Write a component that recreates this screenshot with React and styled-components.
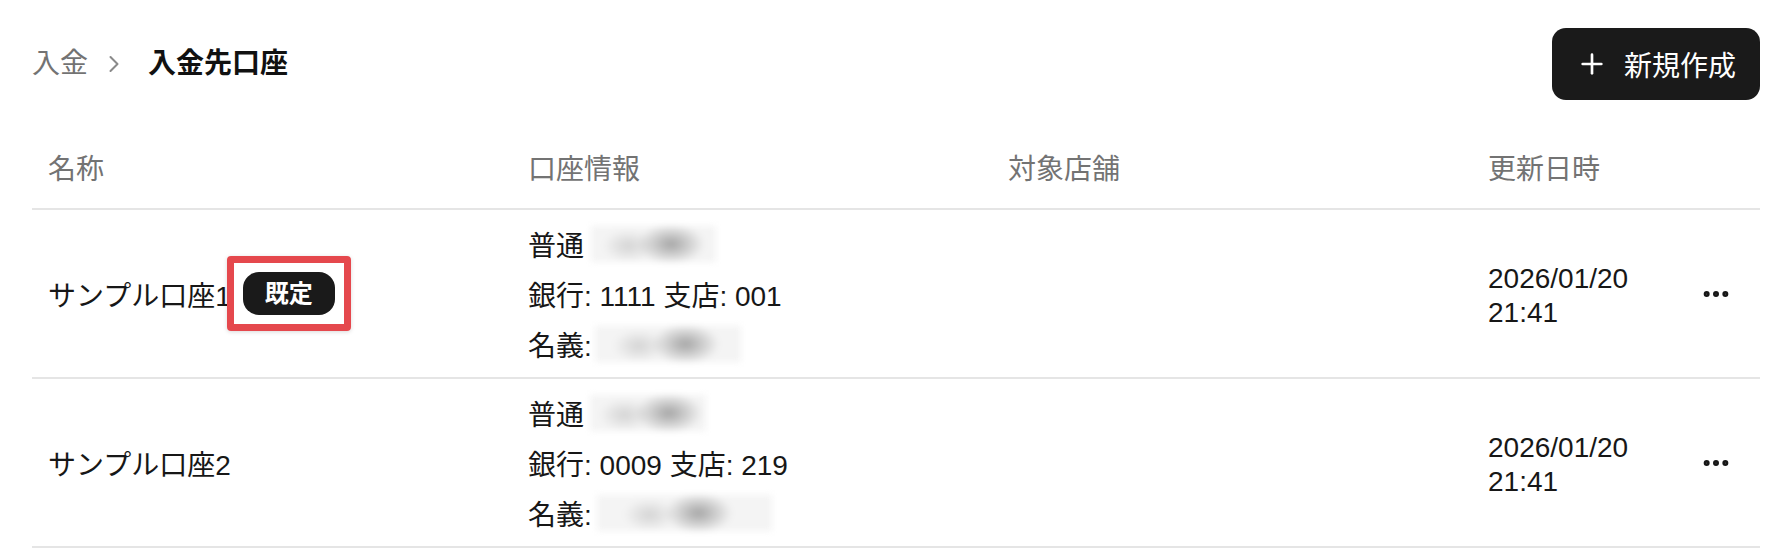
import styled, { createGlobalStyle } from 'styled-components';
import { Plus, Ellipsis, ChevronRight } from 'lucide-react';

const accounts = [
  {
    name: 'サンプル口座1',
    isDefault: true,
    bank: '1111',
    branch: '001',
    numberBlur: { w: 125, gap: 7, spot: 64 },
    holderBlur: { w: 146, gap: 3, spot: 62 },
    updated: '2026/01/20 21:41',
  },
  {
    name: 'サンプル口座2',
    isDefault: false,
    bank: '0009',
    branch: '219',
    numberBlur: { w: 116, gap: 6, spot: 68 },
    holderBlur: { w: 175, gap: 5, spot: 58 },
    updated: '2026/01/20 21:41',
  },
];

const App = () => {
  return (
    <Page>
      <GlobalStyle />
      <TopBar>
        <Breadcrumb>
          <Crumb>入金</Crumb>
          <Separator>
            <ChevronRight size={28} strokeWidth={1.75} />
          </Separator>
          <Current>入金先口座</Current>
        </Breadcrumb>
        <NewButton>
          <Plus size={32} strokeWidth={2} />
          新規作成
        </NewButton>
      </TopBar>

      <Table>
        <HeadRow>
          <HeadCell>名称</HeadCell>
          <HeadCell>口座情報</HeadCell>
          <HeadCell>対象店舗</HeadCell>
          <HeadCell>更新日時</HeadCell>
          <HeadCell />
        </HeadRow>
        {accounts.map((a) => (
          <BodyRow key={a.name}>
            <NameCell>
              {a.name}
              {a.isDefault && <Badge>既定</Badge>}
            </NameCell>
            <AccountCell>
              <AccountLine>
                普通
                <Blur $w={a.numberBlur.w} $gap={a.numberBlur.gap} $spot={a.numberBlur.spot} />
              </AccountLine>
              <AccountLine>
                銀行: {a.bank} 支店: {a.branch}
              </AccountLine>
              <AccountLine>
                名義:
                <Blur $w={a.holderBlur.w} $gap={a.holderBlur.gap} $spot={a.holderBlur.spot} />
              </AccountLine>
            </AccountCell>
            <Cell />
            <DateCell>{a.updated}</DateCell>
            <ActionCell>
              <Ellipsis size={32} strokeWidth={2.5} />
            </ActionCell>
          </BodyRow>
        ))}
      </Table>
    </Page>
  );
};

const GlobalStyle = createGlobalStyle`
  body {
    margin: 0;
    background: #ffffff;
    color: #171717;
    font-family: "Liberation Sans", "Noto Sans CJK JP", sans-serif;
  }
`;

const Page = styled.div`
  padding: 28px 32px 0;
`;

const TopBar = styled.div`
  display: flex;
  justify-content: space-between;
  align-items: center;
  height: 72px;
`;

const Breadcrumb = styled.nav`
  display: flex;
  align-items: center;
  font-size: 28px;
  line-height: 1;
`;

const Crumb = styled.span`
  color: #737373;
`;

const Separator = styled.span`
  display: flex;
  color: #8a8a8a;
  margin: 0 20px 0 12px;
`;

const Current = styled.span`
  font-weight: 700;
  color: #111111;
`;

const NewButton = styled.button`
  display: inline-flex;
  align-items: center;
  gap: 16px;
  height: 72px;
  padding: 0 24px;
  border: none;
  border-radius: 14px;
  background: #1a1a1a;
  color: #ffffff;
  font-family: inherit;
  font-size: 28px;
  cursor: pointer;
`;

const Table = styled.div`
  margin-top: 26px;
`;

const Row = styled.div`
  display: grid;
  grid-template-columns: 1fr 1fr 1fr 200px 88px;
  border-bottom: 2px solid #e5e5e5;
`;

const HeadRow = styled(Row)`
  height: 82px;
`;

const BodyRow = styled(Row)`
  height: 167px;
`;

const Cell = styled.div`
  display: flex;
  align-items: center;
  padding: 0 16px;
  font-size: 28px;
`;

const HeadCell = styled(Cell)`
  color: #737373;
`;

const NameCell = styled(Cell)`
  gap: 12px;
  white-space: nowrap;
`;

const AccountCell = styled(Cell)`
  flex-direction: column;
  align-items: flex-start;
  justify-content: center;
  gap: 8px;
`;

const AccountLine = styled.div`
  display: flex;
  align-items: center;
  height: 42px;
  white-space: pre;
`;

const Blur = styled.span`
  display: inline-block;
  width: ${(p) => p.$w}px;
  height: 36px;
  margin-left: ${(p) => p.$gap}px;
  background:
    radial-gradient(ellipse 34px 20px at ${(p) => p.$spot}% 50%, rgba(150, 150, 150, 0.85), transparent),
    radial-gradient(ellipse 26px 16px at 30% 55%, rgba(185, 185, 185, 0.55), transparent),
    #f4f4f4;
  filter: blur(3px);
`;

const DateCell = styled(Cell)`
  padding-top: 5px;
  line-height: 34px;
`;

const ActionCell = styled(Cell)`
  justify-content: center;
  color: #171717;
`;

const Badge = styled.span`
  position: relative;
  display: inline-block;
  padding: 6px 22px;
  border-radius: 16px;
  background: #1a1a1a;
  color: #ffffff;
  font-size: 24px;
  font-weight: 700;
  line-height: 31px;

  &::after {
    content: '';
    position: absolute;
    inset: -16px;
    border: 7px solid #e5484d;
    border-radius: 4px;
    box-shadow: 0 1px 4px rgba(0, 0, 0, 0.15);
  }
`;

export default App;
